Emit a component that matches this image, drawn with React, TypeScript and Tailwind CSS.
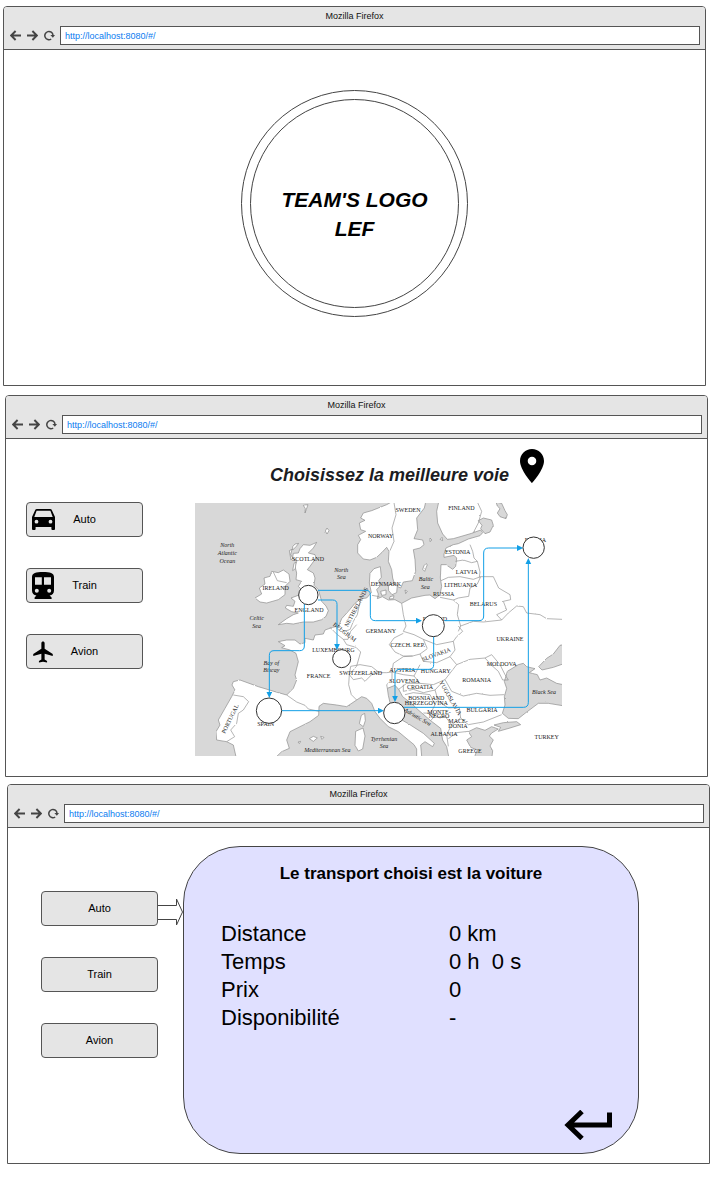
import React from "react";
import { IoMdAirplane } from "react-icons/io";

const URL_TEXT = "http://localhost:8080/#/";

function ArrowGlyph({ flip = false }: { flip?: boolean }) {
  return (
    <svg width="11" height="11" viewBox="0 0 11 11" className="block">
      <path
        d={flip ? "M0 5.5H9.6M5.4 1L9.9 5.5L5.4 10" : "M11 5.5H1.4M5.6 1L1.1 5.5L5.6 10"}
        fill="none"
        stroke="#444"
        strokeWidth="1.9"
      />
    </svg>
  );
}

function ReloadGlyph() {
  return (
    <svg width="11" height="11" viewBox="0 0 11 11" className="block">
      <path d="M7.2 9A4.1 4.1 0 1 1 9 5.2" fill="none" stroke="#444" strokeWidth="1.5" />
      <path d="M6.4 5H11L8.9 7.8Z" fill="#444" />
    </svg>
  );
}

function CarIcon() {
  return (
    <svg width="23" height="21" viewBox="0 0 23 21" fillRule="evenodd" className="block">
      <path d="M3 1.4Q3.5 0 5 0H18Q19.5 0 20 1.4L23 8V20Q23 21 22 21H20.4Q19.4 21 19.4 20V18H3.6V20Q3.6 21 2.6 21H1Q0 21 0 20V8ZM4.6 1.7L2.3 8H20.7L18.4 1.7ZM4.5 10.8A1.9 1.9 0 1 0 4.5 14.6A1.9 1.9 0 1 0 4.5 10.8ZM18.5 10.8A1.9 1.9 0 1 0 18.5 14.6A1.9 1.9 0 1 0 18.5 10.8Z" />
    </svg>
  );
}

function TrainIcon() {
  return (
    <svg width="22" height="27" viewBox="0 0 22 27" fillRule="evenodd" className="block">
      <path d="M0 5C0 1 4 0 11 0S22 1 22 5V18.5C22 21.3 20.2 23.2 17.6 23.4L19.6 25.4V27H2.6V25.4L4.4 23.4C1.8 23.2 0 21.3 0 18.5ZM3 5.2V12.8H9.8V5.2ZM12 5.2V12.8H19V5.2ZM4.8 16.8A2 2 0 1 0 4.8 20.8A2 2 0 1 0 4.8 16.8ZM17.2 16.8A2 2 0 1 0 17.2 20.8A2 2 0 1 0 17.2 16.8Z" />
    </svg>
  );
}

function BrowserWindow({ className, children }: { className: string; children: React.ReactNode }) {
  return (
    <section className={`rounded-t border border-[#555] bg-white ${className}`}>
      <header className="rounded-t-[3px] border-b border-[#555] bg-[#e5e5e5] pb-1">
        <h2 className="h-[19px] text-center text-[9px] leading-[19px] text-[#111]">Mozilla Firefox</h2>
        <div className="flex items-center pl-1.5 pr-[5px]">
          <nav className="flex gap-1.5" aria-label="Navigation">
            <button type="button" aria-label="Précédent">
              <ArrowGlyph />
            </button>
            <button type="button" aria-label="Suivant">
              <ArrowGlyph flip />
            </button>
            <button type="button" aria-label="Recharger">
              <ReloadGlyph />
            </button>
          </nav>
          <input
            type="text"
            aria-label="Adresse"
            defaultValue={URL_TEXT}
            className="ml-[5px] h-[19px] min-w-0 flex-1 border border-[#555] bg-white px-1 text-[9px] text-[#0a7cf0] outline-none"
          />
        </div>
      </header>
      {children}
    </section>
  );
}

function TransportButton({ label, icon }: { label: string; icon?: React.ReactNode }) {
  return (
    <button
      type="button"
      className="grid h-[35px] w-full grid-cols-[32px_1fr_32px] items-center rounded border border-[#555] bg-[#e5e5e5] text-[11px] text-black"
    >
      <span className="flex justify-center">{icon}</span>
      <span>{label}</span>
    </button>
  );
}

const LAND: string[] = [
  // Norway and Sweden
  "M612 8L590 20L570 28L545 38L520 45L512 60L525 67L508 75L512 95L527 100L505 112L512 125L503 140L503 165L520 183L540 186L560 178L576 163L590 148L597 160L595 190L605 215L608 240L615 262L632 270L640 252L667 248L677 220L675 185L670 155L690 150L702 140L698 126L672 122L683 95L680 60L703 30L708 8Z",
  // Continent from Finland round to Greece and the east
  "M747 8L740 40L743 75L758 108L772 124L790 122L845 106L872 96L878 104L870 113L835 123L805 137L790 140L768 150L762 168L762 178L792 172L800 180L797 205L788 214L768 200L753 200L751 240L755 265L750 290L735 302L720 291L705 292L665 300L635 316L615 305L595 306L577 296L562 302L565 288L560 275L572 262L566 248L574 238L571 206L552 212L540 226L538 255L544 284L530 300L512 302L495 316L475 340L455 362L446 384L428 388L405 396L400 408L375 411L370 426L345 421L345 434L330 438L315 426L290 426L265 431L285 443L275 449L300 456L318 466L325 491L315 531L320 546L310 571L290 591L255 581L205 566L150 546L130 551L126 561L135 576L125 596L105 631L85 666L90 681L78 701L80 726L110 731L130 741L140 785L250 785L275 761L298 751L290 726L300 701L330 686L360 671L386 652L387 625L400 616L440 621L470 626L500 606L515 596L530 601L545 616L555 641L570 661L595 686L625 701L655 726L672 740L680 753L680 785L696 785L692 741L705 731L728 746L733 736L700 706L675 690L655 677L632 664L612 640L600 614L595 592L592 571L615 562L626 574L638 596L665 617L685 636L722 668L752 691L758 726L770 746L778 785L1130 785L1130 8Z",
  // Great Britain
  "M340 140L360 142L380 133L370 150L355 165L375 170L378 180L360 205L352 215L370 225L375 240L372 262L385 275L395 310L408 324L415 338L408 355L395 365L370 372L340 372L310 378L290 376L265 380L290 362L310 350L325 345L305 341L286 330L290 322L310 325L315 310L303 300L330 290L335 275L325 265L335 250L318 245L320 225L315 205L320 190L308 178L310 166L325 165L330 152Z",
  // Ireland
  "M245 220L265 224L280 216L297 228L300 250L285 265L285 290L265 305L230 315L210 312L195 300L215 288L208 270L225 258L222 240L240 235Z",
  // Corsica, Sardinia, Balearics, Gotland, Danish and Scottish islands
  "M514 652L524 646L526 668L520 686L508 677Z",
  "M497 700L519 690L525 714L518 753L505 759L495 742Z",
  "M358 722L370 715L382 720L370 730Z",
  "M392 715L402 718L396 724Z",
  "M324 732L332 730L328 737Z",
  "M702 203L708 197L712 200L704 220L698 214Z",
  "M595 262L612 255L622 262L620 284L606 290L596 278Z",
  "M572 280L588 276L588 290L575 292Z",
  "M600 296L612 293L610 302L598 303Z",
  "M645 276L652 280L647 287Z",
  "M720 120L726 126L720 131Z",
  "M750 124L756 118L758 128Z",
  "M340 22L354 20L349 34L345 45L346 32Z",
  "M411 90L417 98L411 108L406 99Z",
  "M308 146L315 138L326 136L318 146L308 156Z",
  "M298 158L306 154L302 170L308 180L303 186Z",
  "M312 196L318 192L316 212L308 218Z",
];

const INLAND_SEAS: string[] = [
  // Lakes
  "M865 68L880 60L905 66L910 82L900 102L885 107L872 92L876 82Z",
  "M918 12L935 16L945 38L952 50L948 62L930 56L922 45L930 32L922 24Z",
  // Aegean
  "M830 726L845 716L835 701L860 689L885 697L905 686L925 693L905 705L898 714L910 726L900 744L908 758L905 785L868 785L855 772L862 756L842 748Z",
  // Marmara
  "M912 681L940 674L980 671L992 680L960 690L925 700L932 688Z",
  // Black Sea
  "M952 520L985 500L1000 496L1010 506L1035 512L1018 524L1042 530L1050 546L1070 540L1100 556L1130 562L1130 625L1075 616L1045 616L1005 646L985 662L955 661L937 646L945 621L943 596L950 571L943 551Z",
  // Azov
  "M1046 506L1070 481L1090 468L1110 442L1130 438L1130 494L1090 508L1056 516Z",
];

const BORDERS: string[] = [
  // Scandinavia and Finland
  "M612 14L618 50L606 90L612 130L600 158",
  "M862 12L875 40L865 75L850 104",
  // Baltic states
  "M797 190L820 186L845 194L862 190",
  "M840 140L848 160L852 180L862 190L870 222L868 238",
  "M753 248L775 238L810 236L850 244L872 236",
  "M872 236L862 258L840 270L836 295L805 300L790 306L750 298",
  "M790 306L806 320L802 350L812 384L805 400",
  // Belarus and Russia
  "M872 236L910 236L926 270L960 290L962 305L940 310L950 336L920 350L935 366",
  "M812 384L850 370L880 372L935 366L955 345L980 324L1000 326L1010 345L1050 350L1070 362L1116 364",
  // Poland
  "M635 316L640 350L648 384L640 400L672 410L700 424L740 440L790 430L800 416L818 400L805 384",
  // Czech, Slovakia, Austria, Hungary
  "M598 440L612 420L640 406M598 440L615 462L640 474L668 474L690 468L712 452L700 424",
  "M690 468L700 490L740 494L780 476L795 456L790 430",
  "M668 474L640 476L610 496L606 522L640 530L672 534L690 500",
  "M672 534L690 556L730 560L765 545L800 500L780 476",
  "M800 500L840 484L885 480L905 470L930 500L945 530L955 546L938 546L925 520L905 502L885 480",
  "M765 545L785 580L820 594L860 586L900 592L943 590",
  // Balkans
  "M626 574L650 556L690 556M640 560L640 580L670 574L700 584L735 576L750 560",
  "M645 590L670 584L720 590L735 620L722 646L700 645",
  "M735 576L745 610L775 630L808 628L812 660L835 680L880 672L935 650",
  "M722 646L750 660L765 655L785 680L770 710L775 745",
  "M785 680L812 660M775 722L800 704L835 700M722 668L738 650",
  // France, Switzerland, Benelux, Germany
  "M446 384L462 400L480 395L490 370L502 350L512 302",
  "M420 388L440 408L460 424L470 440L498 448L512 462L500 504L478 530",
  "M460 424L474 424L482 400L500 380",
  "M478 530L482 505L510 500L545 506L568 524L590 524L606 522",
  "M478 530L490 545L515 540L525 550L545 530L568 524M478 530L476 560L484 590L500 606",
  "M546 292L568 296",
  // Pyrenees, Portugal, Ulster
  "M290 591L320 612L345 622L355 633L387 640",
  "M130 591L160 596L176 611L160 636L145 646L140 676L122 696L134 716L110 731",
  "M250 222L262 248L290 254",
  "M592 571L590 560L606 545L606 522",
];

type Place = { t: string; x: number; y: number; rot?: number; sea?: boolean };

const PLACES: Place[] = [
  { t: "SCOTLAND", x: 354, y: 189 },
  { t: "IRELAND", x: 257, y: 276 },
  { t: "ENGLAND", x: 357, y: 341 },
  { t: "NORWAY", x: 572, y: 119 },
  { t: "SWEDEN", x: 654, y: 43 },
  { t: "FINLAND", x: 814, y: 37 },
  { t: "DENMARK", x: 588, y: 263 },
  { t: "ESTONIA", x: 803, y: 168 },
  { t: "LATVIA", x: 830, y: 228 },
  { t: "LITHUANIA", x: 812, y: 267 },
  { t: "RUSSIA", x: 761, y: 294 },
  { t: "BELARUS", x: 880, y: 324 },
  { t: "RUSSIA", x: 1036, y: 131 },
  { t: "POLAND", x: 735, y: 370 },
  { t: "NETHERLANDS", x: 504, y: 330, rot: -62 },
  { t: "BELGIUM", x: 460, y: 407, rot: 38 },
  { t: "LUXEMBOURG", x: 430, y: 461 },
  { t: "GERMANY", x: 573, y: 404 },
  { t: "FRANCE", x: 386, y: 541 },
  { t: "SWITZERLAND", x: 512, y: 530 },
  { t: "CZECH. REP.", x: 653, y: 446 },
  { t: "SLOVAKIA", x: 741, y: 475, rot: -20 },
  { t: "AUSTRIA", x: 637, y: 521 },
  { t: "HUNGARY", x: 737, y: 525 },
  { t: "UKRAINE", x: 960, y: 428 },
  { t: "MOLDOVA", x: 935, y: 505 },
  { t: "ROMANIA", x: 860, y: 553 },
  { t: "SLOVENIA", x: 643, y: 555 },
  { t: "CROATIA", x: 690, y: 574 },
  { t: "BOSNIA AND", x: 709, y: 605 },
  { t: "HERZEGOVINA", x: 709, y: 621 },
  { t: "YUGOSLAVIA", x: 776, y: 603, rot: 60 },
  { t: "MONTE-", x: 747, y: 647 },
  { t: "NEGRO", x: 747, y: 661 },
  { t: "MACE-", x: 804, y: 675 },
  { t: "DONIA", x: 804, y: 690 },
  { t: "ALBANIA", x: 762, y: 713 },
  { t: "BULGARIA", x: 876, y: 641 },
  { t: "GREECE", x: 840, y: 765 },
  { t: "TURKEY", x: 1070, y: 722 },
  { t: "SPAIN", x: 227, y: 683 },
  { t: "PORTUGAL", x: 126, y: 665, rot: -64 },
  { t: "North", x: 112, y: 146, sea: true },
  { t: "Atlantic", x: 112, y: 170, sea: true },
  { t: "Ocean", x: 112, y: 194, sea: true },
  { t: "North", x: 454, y: 221, sea: true },
  { t: "Sea", x: 454, y: 244, sea: true },
  { t: "Celtic", x: 200, y: 366, sea: true },
  { t: "Sea", x: 200, y: 389, sea: true },
  { t: "Baltic", x: 708, y: 250, sea: true },
  { t: "Sea", x: 706, y: 274, sea: true },
  { t: "Bay of", x: 244, y: 500, sea: true },
  { t: "Biscay", x: 244, y: 523, sea: true },
  { t: "Mediterranean Sea", x: 412, y: 762, sea: true },
  { t: "Tyrrhenian", x: 582, y: 728, sea: true },
  { t: "Sea", x: 582, y: 751, sea: true },
  { t: "Adriatic Sea", x: 680, y: 662, rot: 30, sea: true },
  { t: "Black Sea", x: 1062, y: 588, sea: true },
];

const ROUTES: string[] = [
  "M384 277H528Q541 277 541 290V353Q541 368 556 368H680",
  "M384 306H428Q441 306 441 319V440",
  "M343 318V444Q343 458 329 458H252Q238 458 238 472V584",
  "M275 638H566",
  "M731 414V500Q731 514 717 514H630Q615 514 615 528V596",
  "M640 628H1000Q1015 628 1015 613V196",
  "M763 368H867Q881 368 881 354V165Q881 150 896 150H984",
];

const STOPS = [
  { x: 355, y: 291, r: 29 },
  { x: 455, y: 482, r: 27 },
  { x: 237, y: 638, r: 38 },
  { x: 613, y: 645, r: 32 },
  { x: 730, y: 383, r: 33 },
  { x: 1031, y: 149, r: 32 },
];

function EuropeMap() {
  return (
    <svg viewBox="15 15 1101 759" className="block h-auto w-full" role="img" aria-label="Carte de l'Europe">
      <defs>
        <marker id="tip" markerUnits="userSpaceOnUse" markerWidth="20" markerHeight="20" refX="3" refY="9" orient="auto">
          <path d="M0 0L19 9L0 18Z" fill="#129fe6" />
        </marker>
        <filter id="coast" x="0" y="0" width="100%" height="100%">
          <feTurbulence type="fractalNoise" baseFrequency="0.12" numOctaves="2" seed="4" />
          <feDisplacementMap in="SourceGraphic" scale="5" xChannelSelector="R" yChannelSelector="G" />
        </filter>
      </defs>
      <rect x="15" y="15" width="1101" height="759" fill="#d8d8d8" />
      <g filter="url(#coast)" strokeLinejoin="round">
        <g fill="#fff" stroke="#8a8a8a" strokeWidth="2">
          {LAND.map((d) => (
            <path key={d} d={d} />
          ))}
        </g>
        <g fill="#d8d8d8" stroke="#8a8a8a" strokeWidth="2">
          {INLAND_SEAS.map((d) => (
            <path key={d} d={d} />
          ))}
        </g>
        <g fill="none" stroke="#8f8f8f" strokeWidth="2">
          {BORDERS.map((d) => (
            <path key={d} d={d} />
          ))}
        </g>
      </g>
      <g fill="#222" fontFamily="'Liberation Serif', serif" fontSize="18" textAnchor="middle">
        {PLACES.map((p) => (
          <text
            key={`${p.t}-${p.x}-${p.y}`}
            x={p.x}
            y={p.y}
            fontStyle={p.sea ? "italic" : "normal"}
            transform={p.rot ? `rotate(${p.rot} ${p.x} ${p.y})` : undefined}
          >
            {p.t}
          </text>
        ))}
      </g>
      <g fill="none" stroke="#129fe6" strokeWidth="3">
        {ROUTES.map((d) => (
          <path key={d} d={d} markerEnd="url(#tip)" />
        ))}
      </g>
      <g fill="#fff" stroke="#333" strokeWidth="3">
        {STOPS.map((s) => (
          <circle key={`${s.x}`} cx={s.x} cy={s.y} r={s.r} />
        ))}
      </g>
    </svg>
  );
}

const DETAILS = [
  { label: "Distance", value: "0 km" },
  { label: "Temps", value: "0 h  0 s" },
  { label: "Prix", value: "0" },
  { label: "Disponibilité", value: "-" },
];

export default function App() {
  return (
    <main className="bg-white pb-3.5 pt-1.5 font-['Liberation_Sans',Arial,sans-serif] text-black">
      <BrowserWindow className="ml-[3px] mr-[18px]">
        <div className="flex justify-center pb-[68px] pt-10">
          <div className="size-[227px] rounded-full border border-[#444] p-2">
            <div className="flex size-full items-center justify-center rounded-full border border-[#444] pt-5">
              <h1 className="text-center text-[21px] font-bold italic leading-[29px]">
                TEAM'S LOGO
                <br />
                LEF
              </h1>
            </div>
          </div>
        </div>
      </BrowserWindow>

      <BrowserWindow className="ml-[5px] mr-4 mt-[9px]">
        <div className="flex pb-5 pl-5">
          <div className="flex w-[117px] shrink-0 flex-col gap-[31px] pt-[63px]">
            <TransportButton label="Auto" icon={<CarIcon />} />
            <TransportButton label="Train" icon={<TrainIcon />} />
            <TransportButton label="Avion" icon={<IoMdAirplane size={26} />} />
          </div>
          <div className="ml-[52px] mr-[145px] min-w-0 flex-1 pt-2.5">
            <div className="mb-5 flex h-[34px] items-end gap-[11px] pl-[75px]">
              <h3 className="whitespace-nowrap text-[18px] font-bold italic leading-4 text-[#1c1c22]">
                Choisissez la meilleure voie
              </h3>
              <svg width="24" height="34" viewBox="5 2 14 20" preserveAspectRatio="none" className="block shrink-0">
                <path d="M12 2C8.13 2 5 5.13 5 9c0 5.25 7 13 7 13s7-7.75 7-13c0-3.87-3.13-7-7-7zm0 9.5a2.5 2.5 0 0 1 0-5 2.5 2.5 0 0 1 0 5z" />
              </svg>
            </div>
            <EuropeMap />
          </div>
        </div>
      </BrowserWindow>

      <BrowserWindow className="ml-[7px] mr-3.5 mt-[7px]">
        <div className="flex pb-[9px] pl-[33px] pr-[70px]">
          <div className="flex w-[117px] shrink-0 flex-col gap-[31px] pt-[63px]">
            <TransportButton label="Auto" />
            <TransportButton label="Train" />
            <TransportButton label="Avion" />
          </div>
          <svg width="25" height="28" viewBox="0 0 25 28" className="mt-[70px] block shrink-0">
            <path d="M0 7.5H18.5V1L24.5 14L18.5 27V21.5H0" fill="#fff" stroke="#444" />
          </svg>
          <div className="mt-[18px] flex flex-1 flex-col rounded-[57px] border border-[#444] bg-[#e0e0ff] pb-[13px] pt-[15px]">
            <h3 className="text-center text-[17px] font-bold leading-6">Le transport choisi est la voiture</h3>
            <dl className="mt-[34px] pl-[37px] text-[22px] leading-7">
              {DETAILS.map((d) => (
                <div key={d.label} className="grid grid-cols-[228px_1fr]">
                  <dt>{d.label}</dt>
                  <dd className="whitespace-pre">{d.value}</dd>
                </div>
              ))}
            </dl>
            <button type="button" aria-label="Retour" className="mr-[26px] mt-[78px] self-end">
              <svg width="48" height="30" viewBox="0 0 48 30" className="block">
                <path d="M45.5 2.5V15H4M18 1.5L4 15L18 28.5" fill="none" stroke="#000" strokeWidth="5" />
              </svg>
            </button>
          </div>
        </div>
      </BrowserWindow>
    </main>
  );
}
